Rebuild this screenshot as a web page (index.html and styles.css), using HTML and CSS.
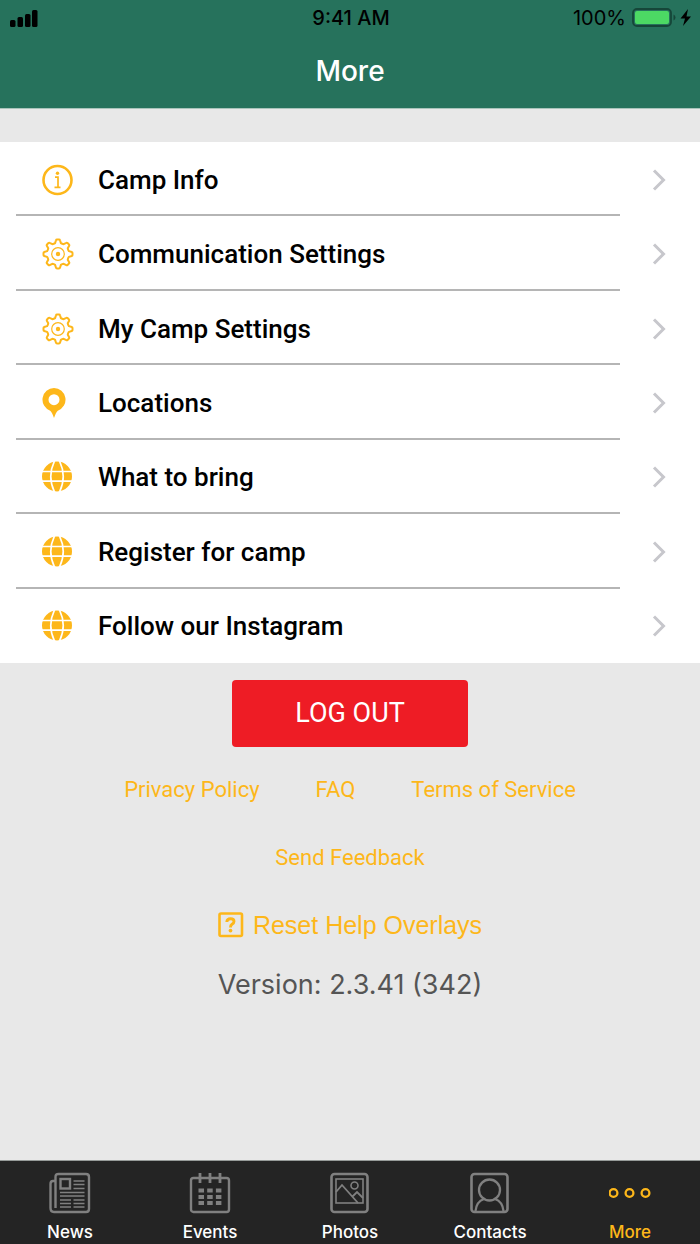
FILE: index.html
```html
<!DOCTYPE html>
<html lang="en">
<head>
  <meta charset="UTF-8">
  <meta name="viewport" content="width=device-width, initial-scale=1">
  <title>More</title>
  <link rel="stylesheet" href="styles.css">
</head>
<body>
  <!-- shared icons -->
  <svg class="sprite" aria-hidden="true">
    <symbol id="gear" viewBox="-16 -16 32 32">
      <path d="M-2.9-10.9L-2-13.8Q-1.8-14.5-1-14.5H1Q1.8-14.5 2-13.8L2.9-10.9Q4.1-10 5.66-9.76L8.34-11.17Q8.98-11.53 9.55-10.96L10.96-9.55Q11.53-8.98 11.17-8.34L9.76-5.66Q10-4.1 10.9-2.9L13.8-2Q14.5-1.8 14.5-1V1Q14.5 1.8 13.8 2L10.9 2.9Q10 4.1 9.76 5.66L11.17 8.34Q11.53 8.98 10.96 9.55L9.55 10.96Q8.98 11.53 8.34 11.17L5.66 9.76Q4.1 10 2.9 10.9L2 13.8Q1.8 14.5 1 14.5H-1Q-1.8 14.5-2 13.8L-2.9 10.9Q-4.1 10-5.66 9.76L-8.34 11.17Q-8.98 11.53-9.55 10.96L-10.96 9.55Q-11.53 8.98-11.17 8.34L-9.76 5.66Q-10 4.1-10.9 2.9L-13.8 2Q-14.5 1.8-14.5 1V-1Q-14.5-1.8-13.8-2L-10.9-2.9Q-10-4.1-9.76-5.66L-11.17-8.34Q-11.53-8.98-10.96-9.55L-9.55-10.96Q-8.98-11.53-8.34-11.17L-5.66-9.76Q-4.1-10-2.9-10.9Z" fill="none" stroke="currentColor" stroke-width="2" stroke-linejoin="round"/>
      <circle r="6.3" fill="none" stroke="currentColor" stroke-width="1.2"/>
      <circle r="2.200" fill="currentColor"/>
    </symbol>
    <symbol id="globe" viewBox="0 0 32 32">
      <circle cx="15" cy="15.500" r="15" fill="currentColor"/>
      <path d="M0 10.500H30M0 20.200H30M12.500 0Q5 15.500 12.500 31M17.500 0Q25 15.500 17.500 31" fill="none" stroke="#fff" stroke-width="1.700"/>
    </symbol>
  </svg>

  <header class="header">
    <div class="status-bar">
      <svg class="signal" width="28" height="18" viewBox="0 0 28 18" aria-label="Signal">
        <rect x="0" y="11" width="5.500" height="7" rx="1.5"/>
        <rect x="7.5" y="8" width="5.5" height="10" rx="1.5"/>
        <rect x="15" y="5" width="5.5" height="13" rx="1.5"/>
        <rect x="22" y="1" width="5.5" height="17" rx="1.5"/>
      </svg>
      <span class="time">9:41 AM</span>
      <span class="battery">
        100%
        <svg width="60" height="20" viewBox="0 0 60 20" aria-hidden="true">
          <rect x="1" y="1" width="38" height="17" rx="4" fill="none" stroke="#164639" stroke-width="1.8"/>
          <rect x="3" y="3" width="34" height="13" rx="2" fill="#4cd964"/>
          <path d="M41.5 6.500Q43.500 7.500 43.500 9.500T41.500 12.500Z" fill="#164639"/>
          <path d="M56 1L48.500 10.500H53L51 18L59 8.500H54.500Z"/>
        </svg>
      </span>
    </div>
    <h1 class="title">More</h1>
  </header>

  <main class="content">
    <nav class="menu">
      <a class="menu-item" href="#">
        <svg class="icon" viewBox="0 0 32 32">
          <circle cx="15.500" cy="16" r="14" fill="none" stroke="currentColor" stroke-width="2.600"/>
          <path d="M13 13.200H16V23.300M12.500 23.300H18.500" fill="none" stroke="currentColor" stroke-width="1.700"/>
          <circle cx="15.500" cy="9.200" r="1.700" fill="currentColor"/>
        </svg>
        <span class="label">Camp Info</span>
        <svg class="chevron" viewBox="0 0 14 22"><path d="M2 1.500L11.500 11L2 20.500"/></svg>
      </a>
      <a class="menu-item" href="#">
        <svg class="icon"><use href="#gear"/></svg>
        <span class="label">Communication Settings</span>
        <svg class="chevron" viewBox="0 0 14 22"><path d="M2 1.500L11.500 11L2 20.500"/></svg>
      </a>
      <a class="menu-item" href="#">
        <svg class="icon"><use href="#gear"/></svg>
        <span class="label">My Camp Settings</span>
        <svg class="chevron" viewBox="0 0 14 22"><path d="M2 1.500L11.500 11L2 20.500"/></svg>
      </a>
      <a class="menu-item" href="#">
        <svg class="icon" viewBox="0 0 32 32">
          <path fill="currentColor" fill-rule="evenodd" d="M12 1A11.700 11.700 0 0 1 15.800 23.700Q14 25 12 31Q10 25 8.200 23.700A11.700 11.700 0 0 1 12 1ZM12 7.200A5.500 5.500 0 1 0 12 18.200A5.500 5.500 0 1 0 12 7.200Z"/>
        </svg>
        <span class="label">Locations</span>
        <svg class="chevron" viewBox="0 0 14 22"><path d="M2 1.500L11.500 11L2 20.500"/></svg>
      </a>
      <a class="menu-item" href="#">
        <svg class="icon"><use href="#globe"/></svg>
        <span class="label">What to bring</span>
        <svg class="chevron" viewBox="0 0 14 22"><path d="M2 1.500L11.500 11L2 20.500"/></svg>
      </a>
      <a class="menu-item" href="#">
        <svg class="icon"><use href="#globe"/></svg>
        <span class="label">Register for camp</span>
        <svg class="chevron" viewBox="0 0 14 22"><path d="M2 1.500L11.500 11L2 20.500"/></svg>
      </a>
      <a class="menu-item" href="#">
        <svg class="icon"><use href="#globe"/></svg>
        <span class="label">Follow our Instagram</span>
        <svg class="chevron" viewBox="0 0 14 22"><path d="M2 1.500L11.500 11L2 20.500"/></svg>
      </a>
    </nav>

    <button class="logout" type="button">LOG OUT</button>

    <div class="links">
      <a href="#">Privacy Policy</a>
      <a href="#">FAQ</a>
      <a href="#">Terms of Service</a>
    </div>
    <div class="links">
      <a href="#">Send Feedback</a>
    </div>

    <button class="reset" type="button">
      <svg width="26" height="26" viewBox="0 0 26 26" aria-hidden="true">
        <rect x="1.500" y="1.500" width="22.500" height="22.500" rx="1.500" fill="none" stroke="currentColor" stroke-width="2.600"/>
        <path d="M8.800 10Q9 6.800 12.600 6.800Q16 6.800 16 9.500Q16 11 14 12.200Q12.500 13.200 12.500 15.500" fill="none" stroke="currentColor" stroke-width="2.900"/>
        <circle cx="12.500" cy="18.600" r="1.900" fill="currentColor"/>
      </svg>
      Reset Help Overlays
    </button>

    <p class="version">Version: 2.3.41 (342)</p>
  </main>

  <nav class="tab-bar">
    <a class="tab" href="#">
      <svg class="tab-icon" viewBox="0 0 42 42">
        <path d="M6.500 36V5Q6.500 2 9.500 2H37Q40 2 40 5V37Q40 40 37 40H5Q1.500 40 1.500 36V12Q1.500 9 4 9H6.500" stroke-width="2.400"/>
        <rect x="11.500" y="7" width="9.500" height="9.500" stroke-width="2.400"/>
        <path d="M24.500 9H35.500M24.500 12.500H35.500M24.500 16.500H35.500M11 20.500H35.500M11 24H35.500M11 28H22M24.500 28H35.500M11 31.500H22M24.500 31.500H35.500M11 35H22M24.500 35H35.500" stroke-width="1.500"/>
      </svg>
      News
    </a>
    <a class="tab" href="#">
      <svg class="tab-icon" viewBox="0 0 42 42">
        <rect x="2" y="6" width="38" height="34" rx="2.500" stroke-width="2.400"/>
        <path d="M11 1V11M21 1V11M31 1V11" stroke-width="2.800"/>
        <path d="M9.500 18.500H33M9.500 25H33M9.500 31H33" stroke-width="4" stroke-dasharray="5.500 3.200"/>
      </svg>
      Events
    </a>
    <a class="tab" href="#">
      <svg class="tab-icon" viewBox="0 0 42 42">
        <rect x="2.500" y="2" width="36" height="38" rx="3" stroke-width="2.600"/>
        <rect x="7" y="7" width="27" height="24" stroke-width="1.600"/>
        <circle cx="25.500" cy="13.500" r="3.500" stroke-width="1.600"/>
        <path d="M7 20L13 13L29 31M23 25L28 20L34 26" stroke-width="1.800"/>
      </svg>
      Photos
    </a>
    <a class="tab" href="#">
      <svg class="tab-icon" viewBox="0 0 42 42">
        <rect x="2.500" y="2" width="36" height="38" rx="3" stroke-width="2.600"/>
        <circle cx="20.500" cy="18" r="10.500" stroke-width="2.300"/>
        <path d="M6.500 39Q7.500 29.500 15 27M26 27Q33.500 29.500 34.500 39" stroke-width="2.300"/>
      </svg>
      Contacts
    </a>
    <a class="tab active" href="#">
      <svg class="tab-icon" viewBox="0 0 42 42">
        <g stroke-width="2.300">
          <circle cx="4.500" cy="21" r="3.900"/>
          <circle cx="20.500" cy="21" r="3.900"/>
          <circle cx="36.500" cy="21" r="3.900"/>
        </g>
      </svg>
      More
    </a>
  </nav>
</body>
</html>
```
FILE: styles.css
```css
* {
  box-sizing: border-box;
}

body {
  margin: 0;
  min-height: 100vh;
  display: flex;
  flex-direction: column;
  background: #e8e8e8;
  font-family: Roboto, sans-serif;
}

a {
  color: inherit;
  text-decoration: none;
}

button {
  padding: 0;
  border: none;
  cursor: pointer;
}

.sprite {
  position: absolute;
  width: 0;
  height: 0;
}

/* header */
.header {
  background: #26725c;
  border-bottom: 1px solid #a9c4bb;
  font-family: Inter, sans-serif;
}

.status-bar {
  display: grid;
  grid-template-columns: 1fr auto 1fr;
  align-items: center;
  height: 36px;
  padding: 0 8px 0 10px;
  font-size: 20px;
}

.time {
  font-weight: 500;
}

.battery {
  display: flex;
  justify-content: flex-end;
  align-items: center;
  gap: 6px;
}

.title {
  margin: 0;
  padding-bottom: 1px;
  color: #fff;
  font-size: 28px;
  font-weight: 500;
  line-height: 71px;
  text-align: center;
}

/* menu */
.content {
  flex: 1;
  display: flex;
  flex-direction: column;
  align-items: center;
  padding-top: 33px;
}

.menu {
  align-self: stretch;
  display: grid;
  grid-auto-rows: 1fr;
  min-height: 521px;
  background: #fff;
}

.menu-item {
  display: grid;
  grid-template-columns: 32px 1fr 14px;
  align-items: center;
  column-gap: 24px;
  margin-left: 16px;
  padding: 1px 34px 0 26px;
  color: #000;
  background: linear-gradient(#b5b5b5, #b5b5b5) no-repeat left bottom / calc(100% - 80px) 2px;
  font-size: 26px;
  font-weight: 500;
}

.menu-item:last-child {
  background: none;
}

.icon {
  width: 32px;
  height: 32px;
  color: #fdb71a;
}

.chevron {
  width: 14px;
  height: 22px;
  fill: none;
  stroke: #c7c7cc;
  stroke-width: 3;
}

/* actions */
.logout {
  width: 236px;
  margin: 17px 0 26px;
  border-radius: 4px;
  background: #ee1c25;
  color: #fff;
  font-family: inherit;
  font-size: 27px;
  line-height: 67px;
}

.links {
  display: flex;
  gap: 56px;
  margin-bottom: 34px;
  color: #fdb71a;
  font-size: 22px;
  line-height: 34px;
}

.reset {
  display: flex;
  align-items: center;
  gap: 9px;
  background: none;
  color: #fdb71a;
  font-family: "Liberation Sans", Arial, sans-serif;
  font-size: 25px;
  line-height: 32px;
}

.version {
  margin: 26px 0;
  color: #555;
  font-family: Inter, sans-serif;
  font-size: 27px;
  line-height: 36px;
}

/* bottom tabs */
.tab-bar {
  display: grid;
  grid-template-columns: repeat(5, 1fr);
  border-top: 1px solid #969b99;
  background: #242424;
  color: #fff;
  font-family: Inter, sans-serif;
  font-size: 17px;
  font-weight: 500;
}

.tab {
  display: flex;
  flex-direction: column;
  align-items: center;
  gap: 7px;
  padding: 11px 0 1px;
  line-height: 22px;
}

.tab-icon {
  width: 42px;
  height: 42px;
  fill: none;
  stroke: #808080;
}

.active {
  color: #fdb71a;
}

.active .tab-icon {
  stroke: #fdb71a;
}
```
